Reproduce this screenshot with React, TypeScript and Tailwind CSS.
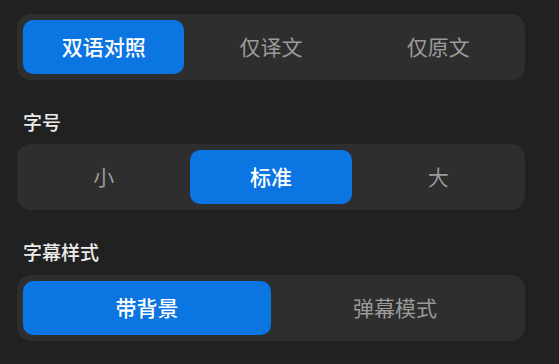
import { useState } from "react"

const font = { fontFamily: '"Noto Sans CJK SC", "Noto Sans", sans-serif' }

function Segmented({
    options,
    value,
    onChange,
    gap = "gap-[6px]",
}: {
    options: string[]
    value: number
    onChange: (i: number) => void
    gap?: string
}) {
    return (
        <div className={`flex h-[66px] rounded-[14px] bg-[#2e2e2e] p-[6px] ${gap}`}>
            {options.map((opt, i) => (
                <button
                    key={opt}
                    onClick={() => onChange(i)}
                    className={
                        i === value
                            ? "flex-1 rounded-[10px] bg-[#0b75e2] text-[21px] font-medium text-white"
                            : "flex-1 rounded-[10px] text-[21px] text-[#9b9b9b]"
                    }
                >
                    {opt}
                </button>
            ))}
        </div>
    )
}

export default function App() {
    const [mode, setMode] = useState(0)
    const [size, setSize] = useState(1)
    const [style, setStyle] = useState(0)

    return (
        <div className="h-[364px] w-[559px] overflow-hidden bg-[#212121] pl-[17px] pr-[34px] pt-[14px]" style={font}>
            <Segmented options={["双语对照", "仅译文", "仅原文"]} value={mode} onChange={setMode}/>

            <p className="mb-[9px] mt-[29px] pl-[6px] text-[19px] font-medium leading-[26px] text-[#ececec]">字号</p>
            <Segmented options={["小", "标准", "大"]} value={size} onChange={setSize}/>

            <p className="mb-[10px] mt-[29px] pl-[6px] text-[19px] font-medium leading-[26px] text-[#ececec]">字幕样式</p>
            <Segmented options={["带背景", "弹幕模式"]} value={style} onChange={setStyle} gap="gap-0"/>
        </div>
    )
}
